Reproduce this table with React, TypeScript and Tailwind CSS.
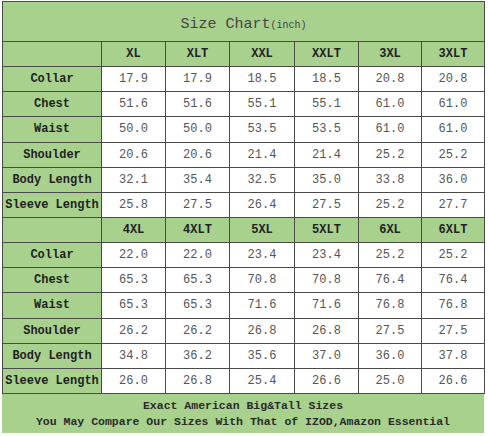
import React from 'react';

interface Block {
    sizes: string[];
    rows: {label: string; values: string[]}[];
}

const blocks: Block[] = [
    {
        sizes: ['XL', 'XLT', 'XXL', 'XXLT', '3XL', '3XLT'],
        rows: [
            {label: 'Collar', values: ['17.9', '17.9', '18.5', '18.5', '20.8', '20.8']},
            {label: 'Chest', values: ['51.6', '51.6', '55.1', '55.1', '61.0', '61.0']},
            {label: 'Waist', values: ['50.0', '50.0', '53.5', '53.5', '61.0', '61.0']},
            {label: 'Shoulder', values: ['20.6', '20.6', '21.4', '21.4', '25.2', '25.2']},
            {label: 'Body Length', values: ['32.1', '35.4', '32.5', '35.0', '33.8', '36.0']},
            {label: 'Sleeve Length', values: ['25.8', '27.5', '26.4', '27.5', '25.2', '27.7']},
        ],
    },
    {
        sizes: ['4XL', '4XLT', '5XL', '5XLT', '6XL', '6XLT'],
        rows: [
            {label: 'Collar', values: ['22.0', '22.0', '23.4', '23.4', '25.2', '25.2']},
            {label: 'Chest', values: ['65.3', '65.3', '70.8', '70.8', '76.4', '76.4']},
            {label: 'Waist', values: ['65.3', '65.3', '71.6', '71.6', '76.8', '76.8']},
            {label: 'Shoulder', values: ['26.2', '26.2', '26.8', '26.8', '27.5', '27.5']},
            {label: 'Body Length', values: ['34.8', '36.2', '35.6', '37.0', '36.0', '37.8']},
            {label: 'Sleeve Length', values: ['26.0', '26.8', '25.4', '26.6', '25.0', '26.6']},
        ],
    },
];

const mono = {fontFamily: '"Liberation Mono", "DejaVu Sans Mono", monospace'};

export default function App() {
    return (
        <div className="w-[488px] h-[436px] bg-white pl-[2px] pt-[1px]" style={mono}>
            <table className="border-collapse table-fixed w-[482px]">
                <colgroup>
                    <col className="w-[99px]" />
                    <col className="w-[64px]" />
                    <col className="w-[64px]" />
                    <col className="w-[65px]" />
                    <col className="w-[64px]" />
                    <col className="w-[63px]" />
                    <col className="w-[63px]" />
                </colgroup>
                <tbody>
                    {/* titre */}
                    <tr className="h-[40px]">
                        <td colSpan={7} className="border border-[#4a4a4a] bg-[#a9d18e] text-center text-[#444] pt-[6px]">
                            <span className="text-[15px]">Size Chart</span>
                            <span className="text-[10px]">(inch)</span>
                        </td>
                    </tr>
                    {blocks.map((block, b) => (
                        <React.Fragment key={b}>
                            <tr className="h-[25.15px]">
                                <td className="border border-[#4a4a4a] bg-[#a9d18e]"></td>
                                {block.sizes.map((s) => (
                                    <td key={s} className="border border-[#4a4a4a] bg-[#a9d18e] text-center text-[12px] font-bold text-[#222]">
                                        {s}
                                    </td>
                                ))}
                            </tr>
                            {block.rows.map((row) => (
                                <tr key={row.label} className="h-[25.15px]">
                                    <td className="border border-[#4a4a4a] bg-[#a9d18e] text-center text-[12px] font-bold text-[#1f1f1f] whitespace-nowrap">
                                        {row.label}
                                    </td>
                                    {row.values.map((v, i) => (
                                        <td key={i} className="border border-[#4a4a4a] bg-white text-center text-[12px] text-[#555]">
                                            {v}
                                        </td>
                                    ))}
                                </tr>
                            ))}
                        </React.Fragment>
                    ))}
                </tbody>
            </table>
            {/* bandeau du bas */}
            <div className="w-[482px] h-[39px] bg-[#a9d18e] flex flex-col items-center justify-center pt-[2px] text-[11.5px] font-bold text-[#2a2a2a] leading-[16px]">
                <div>Exact American Big&amp;Tall Sizes</div>
                <div>You May Compare Our Sizes With That of IZOD,Amazon Essential</div>
            </div>
        </div>
    );
}
